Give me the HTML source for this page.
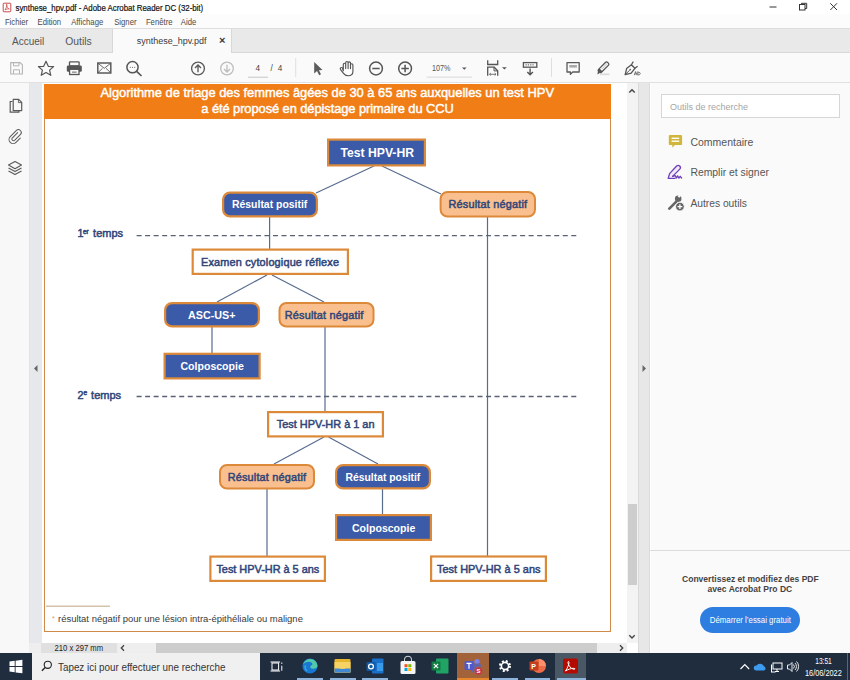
<!DOCTYPE html>
<html><head><meta charset="utf-8">
<style>
*{margin:0;padding:0;box-sizing:border-box}
html,body{width:850px;height:680px;overflow:hidden;background:#fff;font-family:"Liberation Sans",sans-serif}
.a{position:absolute}
</style></head><body>
<div class="a" style="left:0px;top:0px;width:850px;height:14px;background:#fff"></div>
<div class="a" style="left:0px;top:14px;width:850px;height:14px;background:#fcfcfc"></div>
<div class="a" style="left:0px;top:28px;width:850px;height:25px;background:#e9e9e9;border-top:1px solid #dedede;border-bottom:1px solid #d8d8d8"></div>
<div class="a" style="left:112px;top:29px;width:120px;height:24px;background:#fafafa;border-left:1px solid #d8d8d8;border-right:1px solid #d8d8d8"></div>
<div class="a" style="left:0px;top:53px;width:850px;height:30px;background:#fafafa;border-bottom:1px solid #e1e1e1"></div>
<div class="a" style="left:0px;top:83px;width:30px;height:570px;background:#f8f8f8;border-right:1px solid #e3e3e3"></div>
<div class="a" style="left:30px;top:83px;width:12px;height:560px;background:#e6e8eb"></div>
<div class="a" style="left:42px;top:83px;width:585px;height:560px;background:#fff"></div>
<div class="a" style="left:44px;top:84px;width:567px;height:548px;border:1.4px solid #d08a4a;border-top:none"></div>
<div class="a" style="left:44px;top:84px;width:567px;height:35px;background:#f07d16"></div>
<div class="a" style="left:627px;top:83px;width:11px;height:560px;background:#f3f3f3"></div>
<div class="a" style="left:628px;top:504px;width:9px;height:81px;background:#cdcdcd"></div>
<div class="a" style="left:638px;top:83px;width:12px;height:570px;background:#e7e7e7;border-left:1px solid #d9d9d9;border-right:1px solid #dadada"></div>
<div class="a" style="left:651px;top:83px;width:199px;height:570px;background:#fafafa"></div>
<div class="a" style="left:650px;top:550px;width:200px;height:1px;background:#dcdcdc"></div>
<div class="a" style="left:661px;top:94px;width:179px;height:24px;background:#fff;border:1px solid #d6d6d6"></div>
<div class="a" style="left:700px;top:607px;width:100px;height:26px;background:#2d7ee0;border-radius:13px"></div>
<div class="a" style="left:29px;top:642.5px;width:598px;height:10px;background:#eeeeee"></div>
<div class="a" style="left:41px;top:642.5px;width:76px;height:10px;background:#e0e0e0"></div>
<div class="a" style="left:156px;top:642.5px;width:441px;height:10px;background:#cdcdcd"></div>
<div class="a" style="left:29px;top:652.5px;width:822px;height:1px;background:#f7f7f7"></div>
<div class="a" style="left:0px;top:653px;width:850px;height:27px;background:#1f2d3e"></div>
<div class="a" style="left:32px;top:653px;width:228px;height:27px;background:#f0f0f0"></div>
<div class="a" style="left:457px;top:653px;width:32px;height:27px;background:#a3633a"></div>
<div class="a" style="left:555px;top:653px;width:31px;height:27px;background:#4a5866"></div>
<div class="a" style="left:297px;top:678px;width:26px;height:2px;background:#8fb4dc"></div>
<div class="a" style="left:330px;top:678px;width:26px;height:2px;background:#8fb4dc"></div>
<div class="a" style="left:362px;top:678px;width:26px;height:2px;background:#8fb4dc"></div>
<div class="a" style="left:457px;top:678px;width:32px;height:2px;background:#e8862c"></div>
<div class="a" style="left:492px;top:678px;width:26px;height:2px;background:#8fb4dc"></div>
<div class="a" style="left:525px;top:678px;width:25px;height:2px;background:#8fb4dc"></div>
<div class="a" style="left:557px;top:678px;width:29px;height:2px;background:#8fb4dc"></div>
<div class="a" style="left:847px;top:653px;width:1px;height:27px;background:#5a6670"></div>
<svg class="a" style="left:0;top:0" width="850" height="680" viewBox="0 0 850 680" font-family="Liberation Sans, sans-serif">
<text transform="translate(15.5,11) scale(0.875,1)" font-size="9" fill="#111" font-weight="normal" stroke="#111" stroke-width="0.2">synthese_hpv.pdf - Adobe Acrobat Reader DC (32-bit)</text>
<text transform="translate(4.9,24.6) scale(0.86,1)" font-size="9" fill="#4a4a4a" font-weight="normal">Fichier</text>
<text transform="translate(37.5,24.6) scale(0.86,1)" font-size="9" fill="#4a4a4a" font-weight="normal">Edition</text>
<text transform="translate(71.2,24.6) scale(0.86,1)" font-size="9" fill="#4a4a4a" font-weight="normal">Affichage</text>
<text transform="translate(114.2,24.6) scale(0.86,1)" font-size="9" fill="#4a4a4a" font-weight="normal">Signer</text>
<text transform="translate(145.9,24.6) scale(0.86,1)" font-size="9" fill="#4a4a4a" font-weight="normal">Fenêtre</text>
<text transform="translate(180.8,24.6) scale(0.86,1)" font-size="9" fill="#4a4a4a" font-weight="normal">Aide</text>
<text transform="translate(12,44.9) scale(0.913,1)" font-size="11" fill="#555" font-weight="normal">Accueil</text>
<text transform="translate(65.3,44.9) scale(0.942,1)" font-size="11" fill="#555" font-weight="normal">Outils</text>
<text transform="translate(136.7,43.6) scale(0.949,1)" font-size="9.5" fill="#3a3a3a" font-weight="normal">synthese_hpv.pdf</text>
<text transform="translate(219,44) scale(1.0,1)" font-size="11" fill="#3a3a3a" font-weight="bold">×</text>
<text transform="translate(255.6,70.8) scale(1.0,1)" font-size="8.2" fill="#444" font-weight="normal">4</text>
<text transform="translate(270.6,70.8) scale(1.0,1)" font-size="8.2" fill="#444" font-weight="normal">/</text>
<text transform="translate(277.8,70.8) scale(1.0,1)" font-size="8.2" fill="#444" font-weight="normal">4</text>
<rect x="248" y="76.8" width="20" height="0.7" fill="#b0b0b0"/>
<text transform="translate(432,71) scale(0.84,1)" font-size="8.6" fill="#555" font-weight="normal">107%</text>
<rect x="426.6" y="76.7" width="45.5" height="0.8" fill="#cfcfcf"/>
<path d="M462 67.5 h4.6 l-2.3 2.3z" fill="#555"/>
<rect x="295.3" y="58" width="0.9" height="19" fill="#dcdcdc"/>
<rect x="551" y="58" width="0.9" height="19" fill="#dcdcdc"/>
<text x="100.5" y="96.6" font-size="12.9" fill="#fff" stroke="#fff" stroke-width="0.45" textLength="453.5" lengthAdjust="spacing">Algorithme de triage des femmes âgées de 30 à 65 ans auxquelles un test HPV</text>
<text x="201.3" y="112.5" font-size="12.9" fill="#fff" stroke="#fff" stroke-width="0.45" textLength="252.5" lengthAdjust="spacing">a été proposé en dépistage primaire du CCU</text>
<line x1="374" y1="166" x2="316" y2="193" stroke="#586c8e" stroke-width="1.2"/>
<line x1="382" y1="166" x2="441" y2="194" stroke="#586c8e" stroke-width="1.2"/>
<line x1="269.6" y1="217" x2="269.6" y2="249" stroke="#586c8e" stroke-width="1.2"/>
<line x1="487.5" y1="217" x2="487.5" y2="556" stroke="#586c8e" stroke-width="1.2"/>
<line x1="267" y1="275" x2="217" y2="302" stroke="#586c8e" stroke-width="1.2"/>
<line x1="272" y1="275" x2="324" y2="302" stroke="#586c8e" stroke-width="1.2"/>
<line x1="212" y1="327" x2="212" y2="353" stroke="#586c8e" stroke-width="1.2"/>
<line x1="325" y1="327" x2="325" y2="411" stroke="#586c8e" stroke-width="1.2"/>
<line x1="324" y1="437" x2="274" y2="464" stroke="#586c8e" stroke-width="1.2"/>
<line x1="328.5" y1="437" x2="378" y2="464" stroke="#586c8e" stroke-width="1.2"/>
<line x1="267" y1="489" x2="267" y2="556" stroke="#586c8e" stroke-width="1.2"/>
<line x1="382.5" y1="489" x2="382.5" y2="514" stroke="#586c8e" stroke-width="1.2"/>
<line x1="136.6" y1="235.6" x2="577" y2="235.6" stroke="#586275" stroke-width="1.3" stroke-dasharray="5 3.523"/>
<line x1="136.6" y1="396.5" x2="577" y2="396.5" stroke="#586275" stroke-width="1.3" stroke-dasharray="5 3.523"/>
<rect x="328.10" y="139.60" width="96.80" height="25.80" rx="0" fill="#3b5aa8" stroke="#dc8a3a" stroke-width="2.2"/>
<text x="340.5" y="156.7" fill="#fff" font-size="12.2" font-weight="bold" textLength="73.5" lengthAdjust="spacingAndGlyphs">Test HPV-HR</text>
<rect x="223.10" y="192.60" width="93.80" height="23.80" rx="7" fill="#3b5aa8" stroke="#dc8a3a" stroke-width="2.2"/>
<text x="232" y="208.2" fill="#fff" font-weight="bold" font-size="10.5" textLength="75.3" lengthAdjust="spacingAndGlyphs">Résultat positif</text>
<rect x="440.60" y="192.00" width="94.40" height="24.50" rx="7" fill="#f9bf8e" stroke="#dc8a3a" stroke-width="2"/>
<text x="448.4" y="208.2" fill="#30467a" stroke="#30467a" stroke-width="0.5" font-size="10.9" textLength="78.7" lengthAdjust="spacing">Résultat négatif</text>
<rect x="192.70" y="249.60" width="155.20" height="24.30" rx="0" fill="#fff" stroke="#dc8a3a" stroke-width="2.2"/>
<text x="201" y="265.7" fill="#30467a" stroke="#30467a" stroke-width="0.5" font-size="10.9" textLength="138" lengthAdjust="spacing">Examen cytologique réflexe</text>
<rect x="165.10" y="303.10" width="93.80" height="23.30" rx="7" fill="#3b5aa8" stroke="#dc8a3a" stroke-width="2.2"/>
<text x="188" y="318.7" fill="#fff" font-weight="bold" font-size="10.5" textLength="47.5" lengthAdjust="spacingAndGlyphs">ASC-US+</text>
<rect x="279.50" y="303.00" width="94.00" height="23.50" rx="7" fill="#f9bf8e" stroke="#dc8a3a" stroke-width="2"/>
<text x="284.7" y="318.7" fill="#30467a" stroke="#30467a" stroke-width="0.5" font-size="10.9" textLength="78.6" lengthAdjust="spacing">Résultat négatif</text><text x="364" y="314.5" fill="#f0a060" font-size="6">*</text>
<rect x="164.60" y="353.80" width="95.00" height="24.60" rx="0" fill="#3b5aa8" stroke="#dc8a3a" stroke-width="2.2"/>
<text x="180.5" y="370" fill="#fff" font-weight="bold" font-size="10.5" textLength="63.3" lengthAdjust="spacingAndGlyphs">Colposcopie</text>
<rect x="268.10" y="412.10" width="114.80" height="24.30" rx="0" fill="#fff" stroke="#dc8a3a" stroke-width="2.2"/>
<text x="276.8" y="428" fill="#30467a" stroke="#30467a" stroke-width="0.5" font-size="10.9" textLength="97.7" lengthAdjust="spacing">Test HPV-HR à 1 an</text>
<rect x="220.00" y="465.00" width="94.00" height="23.50" rx="7" fill="#f9bf8e" stroke="#dc8a3a" stroke-width="2"/>
<text x="227.7" y="480.5" fill="#30467a" stroke="#30467a" stroke-width="0.5" font-size="10.9" textLength="78.3" lengthAdjust="spacing">Résultat négatif</text>
<rect x="336.10" y="465.10" width="93.80" height="23.30" rx="7" fill="#3b5aa8" stroke="#dc8a3a" stroke-width="2.2"/>
<text x="345.5" y="480.5" fill="#fff" font-weight="bold" font-size="10.5" textLength="74.8" lengthAdjust="spacingAndGlyphs">Résultat positif</text>
<rect x="336.10" y="515.10" width="94.80" height="24.80" rx="0" fill="#3b5aa8" stroke="#dc8a3a" stroke-width="2.2"/>
<text x="352" y="531.5" fill="#fff" font-weight="bold" font-size="10.5" textLength="63.3" lengthAdjust="spacingAndGlyphs">Colposcopie</text>
<rect x="210.40" y="556.60" width="114.50" height="24.30" rx="0" fill="#fff" stroke="#dc8a3a" stroke-width="2.2"/>
<text x="216.4" y="572.5" fill="#30467a" stroke="#30467a" stroke-width="0.5" font-size="10.9" textLength="102.8" lengthAdjust="spacing">Test HPV-HR à 5 ans</text>
<rect x="431.10" y="556.50" width="114.80" height="24.40" rx="0" fill="#fff" stroke="#dc8a3a" stroke-width="2.2"/>
<text x="437" y="572.5" fill="#30467a" stroke="#30467a" stroke-width="0.5" font-size="10.9" textLength="103.5" lengthAdjust="spacing">Test HPV-HR à 5 ans</text>
<g fill="#30467a" stroke="#30467a" stroke-width="0.5"><text x="77.6" y="236.7" font-size="10.8">1</text><text x="83" y="233.8" font-size="6.6" textLength="5.8" lengthAdjust="spacingAndGlyphs">er</text><text x="93.1" y="236.7" font-size="10.8" textLength="29.9" lengthAdjust="spacingAndGlyphs">temps</text></g>
<g fill="#30467a" stroke="#30467a" stroke-width="0.5"><text x="77.6" y="398.5" font-size="10.8">2</text><text x="83.4" y="394.6" font-size="6.6">e</text><text x="91.1" y="398.5" font-size="10.8" textLength="30" lengthAdjust="spacingAndGlyphs">temps</text></g>
<line x1="46" y1="606.2" x2="110" y2="606.2" stroke="#d2c3aa" stroke-width="1.5"/>
<text x="52" y="621" fill="#d9956a" font-size="7">*</text>
<text x="58" y="622" fill="#3a3a3a" font-size="9.46">résultat négatif pour une lésion intra-épithéliale ou maligne</text>
<text transform="translate(670,110) scale(0.937,1)" font-size="9.6" fill="#a6a6a6" font-weight="normal">Outils de recherche</text>
<text transform="translate(690.4,145.5) scale(0.955,1)" font-size="11" fill="#555" font-weight="normal">Commentaire</text>
<text transform="translate(690.4,176.1) scale(0.945,1)" font-size="11" fill="#555" font-weight="normal">Remplir et signer</text>
<text transform="translate(690.4,206.9) scale(0.935,1)" font-size="11" fill="#555" font-weight="normal">Autres outils</text>
<text transform="translate(682,582) scale(0.92,1)" font-size="9.3" fill="#444" font-weight="bold">Convertissez et modifiez des PDF</text>
<text transform="translate(707.6,592) scale(0.92,1)" font-size="9.3" fill="#444" font-weight="bold">avec Acrobat Pro DC</text>
<text transform="translate(709.8,622.5) scale(0.845,1)" font-size="9.3" fill="#fff" font-weight="normal">Démarrer l’essai gratuit</text>
<text transform="translate(54.6,651.2) scale(0.9,1)" font-size="8.5" fill="#222" font-weight="normal">210 x 297 mm</text>
<text transform="translate(58,671) scale(0.897,1)" font-size="11" fill="#333" font-weight="normal">Tapez ici pour effectuer une recherche</text>
<text transform="translate(815.2,664) scale(0.7,1)" font-size="9.5" fill="#fff" font-weight="normal">13:51</text>
<text transform="translate(805,675.8) scale(0.79,1)" font-size="9.3" fill="#fff" font-weight="normal">16/06/2022</text>
<rect x="3.2" y="3.2" width="7.6" height="8.6" rx="0.8" fill="#fff" stroke="#c94a4a" stroke-width="1"/>
<path d="M5 10 C6 8 7 6 7 4.8 C7 4 6.4 4 6.5 5 C6.7 6.5 8 8.5 9.3 9 C8 8.6 6.2 9 5 10z" fill="none" stroke="#c94a4a" stroke-width="0.8"/>
<rect x="769.5" y="6.5" width="7" height="1" fill="#333"/>
<rect x="799.5" y="4.5" width="5.5" height="5.5" fill="none" stroke="#333" stroke-width="1"/><path d="M801.5 4.5 v-1.2 h5.2 v5.2 h-1.7" fill="none" stroke="#333" stroke-width="1"/>
<path d="M830.3 3.3 L837 10 M837 3.3 L830.3 10" stroke="#333" stroke-width="1"/>
<path d="M10.7 62.6 h9.5 l2.2 2.2 v9.2 h-11.7z" fill="none" stroke="#b5b5b5" stroke-width="1.1"/>
<path d="M13.5 62.6 v3.2 h5.5 v-3.2 M13.5 74 v-4.2 h6 v4.2" fill="none" stroke="#b5b5b5" stroke-width="1"/>
<path d="M46 61.3 L48.3 66.3 L53.6 66.6 L49.6 70.1 L50.8 75.3 L46 72.5 L41.2 75.3 L42.4 70.1 L38.4 66.6 L43.7 66.3z" fill="none" stroke="#555" stroke-width="1.2" stroke-linejoin="round"/>
<rect x="69.5" y="61.8" width="9.6" height="4" rx="0.5" fill="none" stroke="#555" stroke-width="1.3"/>
<rect x="66.8" y="65.6" width="15" height="6.2" rx="1.3" fill="#555"/>
<rect x="69.6" y="69.3" width="9.4" height="5.2" fill="#fafafa" stroke="#555" stroke-width="1.3"/>
<rect x="72" y="71.5" width="4.6" height="1.3" fill="#888"/>
<rect x="97.8" y="63" width="13" height="10" fill="none" stroke="#5a5a5a" stroke-width="1.5"/>
<path d="M98 63.3 L104.3 68.3 L110.6 63.3 M98 72.7 L102.5 68.3 M110.6 72.7 L106 68.3" fill="none" stroke="#5a5a5a" stroke-width="0.9"/>
<circle cx="132.5" cy="67.2" r="5.6" fill="none" stroke="#555" stroke-width="1.5"/>
<path d="M136.6 71.3 L141 75.5" stroke="#555" stroke-width="1.7" stroke-linecap="round"/>
<circle cx="130.3" cy="67.3" r="0.55" fill="#555"/><circle cx="132.5" cy="67.3" r="0.55" fill="#555"/><circle cx="134.7" cy="67.3" r="0.55" fill="#555"/>
<circle cx="198" cy="68.5" r="6.4" fill="none" stroke="#5a5a5a" stroke-width="1.35"/>
<path d="M198 72.3 v-7.2 M195 68 l3 -3 l3 3" fill="none" stroke="#5a5a5a" stroke-width="1.35"/>
<circle cx="227" cy="68.5" r="6.3" fill="none" stroke="#bdbdbd" stroke-width="1.3"/>
<path d="M227 64.7 v7.2 M224 69 l3 3 l3 -3" fill="none" stroke="#bdbdbd" stroke-width="1.3"/>
<path d="M314.2 62 L314.2 73.5 L317 71 L319.2 75.2 L321 74.3 L318.9 70.2 L322.5 70z" fill="#5c5c5c"/>
<path d="M343.3 70.8 V64.4 a1.2 1.2 0 0 1 2.4 0 V68.6 V62.7 a1.2 1.2 0 0 1 2.4 0 V68.6 V63.1 a1.2 1.2 0 0 1 2.4 0 V68.6 V64.9 a1.2 1.2 0 0 1 2.4 0 V71.6 c0 2.5 -2 4.2 -4.8 4.2 c-2.4 0 -3.6 -0.9 -4.8 -2.6 l-2.9 -3.9 a1.2 1.2 0 0 1 2 -1.3z" fill="#fff" stroke="#555" stroke-width="1.15" stroke-linejoin="round"/>
<circle cx="376" cy="68.5" r="6.4" fill="none" stroke="#555" stroke-width="1.5"/><path d="M372.3 68.5 h7.4" stroke="#555" stroke-width="1.5"/>
<circle cx="405.1" cy="68.5" r="6.4" fill="none" stroke="#555" stroke-width="1.5"/><path d="M401.4 68.5 h7.4 M405.1 64.8 v7.4" stroke="#555" stroke-width="1.5"/>
<path d="M487.7 60.2 v4.3 h10 v-4.3" fill="none" stroke="#555" stroke-width="1.3"/>
<path d="M487.7 75.8 v-8.6 h6.5 l3.5 3.5 v5.1" fill="none" stroke="#555" stroke-width="1.3"/><path d="M494 67.2 v3.7 h3.7" fill="none" stroke="#555" stroke-width="1"/>
<path d="M489.5 74.3 h6.5 M489.5 74.3 l1.3 -1.2 M489.5 74.3 l1.3 1.2 M496 74.3 l-1.3 -1.2 M496 74.3 l-1.3 1.2" stroke="#555" stroke-width="0.8" fill="none"/>
<path d="M502 67.3 h4.8 l-2.4 2.2z" fill="#555"/>
<rect x="523.4" y="62.6" width="13.4" height="4.6" fill="none" stroke="#555" stroke-width="1.3"/>
<path d="M525.5 64.9 h9" stroke="#555" stroke-width="1" stroke-dasharray="1.3 1"/>
<path d="M530.1 68.5 v6.3 M527.3 72 l2.8 2.8 l2.8 -2.8" fill="none" stroke="#555" stroke-width="1.4"/>
<path d="M567 62.6 h12.2 v9.4 h-6.5 l-2.3 2.4 v-2.4 h-3.4z" fill="none" stroke="#5a5a5a" stroke-width="1.3" stroke-linejoin="round"/>
<rect x="569.3" y="65" width="7.6" height="2.6" fill="#aaa"/>
<path d="M600 74.3 h9.5" stroke="#dcdcdc" stroke-width="1.8"/>
<g transform="translate(603.2,67.6) rotate(-45)"><rect x="-5.8" y="-2.1" width="12.6" height="4.2" rx="1.6" fill="#f4f4f4" stroke="#555" stroke-width="1.25"/><rect x="-5.8" y="-2.1" width="2.6" height="4.2" fill="#555"/><path d="M-5.8 -1.6 L-9 0.9 L-5.8 1.6z" fill="#555"/><path d="M-2 0 h7" stroke="#d0d0d0" stroke-width="1"/></g>
<path d="M625.2 74.6 L626.6 68.6 L631.4 64.8 L634.9 68.3 L631.2 73.1z" fill="none" stroke="#555" stroke-width="1.3" stroke-linejoin="round"/>
<path d="M625.2 74.6 L629.6 70.2" stroke="#555" stroke-width="1"/><circle cx="630.2" cy="69.6" r="0.8" fill="#555"/>
<path d="M631.4 64.8 L633.3 61.6 M634.9 68.3 L637.6 66.2" stroke="#555" stroke-width="1.2"/>
<g transform="translate(634.2,75.2) scale(1,1)"><path d="M0 0 l1.4 -3.6 l1.4 3.6 M0.6 -1.3 h1.6 M3.6 0 v-3.8 M3.6 -0.9 a1.3 1.3 0 1 0 0.1 -1.6" fill="none" stroke="#555" stroke-width="0.8"/></g>
<path d="M12.5 101.5 h-2.3 v10.7 h8.7 v-1.5" fill="none" stroke="#5a5a5a" stroke-width="1.2"/>
<path d="M13.2 99.3 h5.5 l3 3 v8.3 h-8.5z" fill="none" stroke="#5a5a5a" stroke-width="1.2" stroke-linejoin="round"/><path d="M18.4 99.3 v3.3 h3.3" fill="none" stroke="#5a5a5a" stroke-width="0.9"/>
<path d="M18.6 133 l-6.4 6.4 a2 2 0 0 0 2.8 2.8 l7 -7 a3.4 3.4 0 0 0 -4.8 -4.8 l-7.3 7.3 a4.8 4.8 0 0 0 6.8 6.8 l5 -5" fill="none" stroke="#5a5a5a" stroke-width="1.2" stroke-linecap="round" transform="translate(15,136) scale(0.85) translate(-15.5,-137)"/>
<path d="M15 161.5 l6.5 3.6 l-6.5 3.6 l-6.5 -3.6z" fill="none" stroke="#5a5a5a" stroke-width="1.1" stroke-linejoin="round"/>
<path d="M8.5 168 l6.5 3.6 l6.5 -3.6 M8.5 171 l6.5 3.6 l6.5 -3.6" fill="none" stroke="#5a5a5a" stroke-width="1.1" stroke-linejoin="round"/>
<path d="M629.3 92.5 l2.7 -2.7 l2.7 2.7" fill="none" stroke="#444" stroke-width="1.4"/>
<path d="M629.3 635.3 l2.7 2.7 l2.7 -2.7" fill="none" stroke="#444" stroke-width="1.4"/>
<path d="M642.5 365 v7 l3.5 -3.5z" fill="#666"/>
<path d="M37.5 365 v7 l-3.5 -3.5z" fill="#666"/>
<path d="M124 645.3 l-2.7 2.7 l2.7 2.7" fill="none" stroke="#444" stroke-width="1.3"/>
<path d="M620 645.3 l2.7 2.7 l-2.7 2.7" fill="none" stroke="#444" stroke-width="1.4"/>
<path d="M670 134.9 h10.9 a1.2 1.2 0 0 1 1.2 1.2 v7.8 a1.2 1.2 0 0 1 -1.2 1.2 h-6 l-2.6 2.6 v-2.6 h-2.3 a1.2 1.2 0 0 1 -1.2 -1.2 v-7.8 a1.2 1.2 0 0 1 1.2 -1.2z" fill="#d2b63c"/>
<rect x="671.6" y="137.6" width="7.6" height="1.4" fill="#fff"/><rect x="671.6" y="140.5" width="7.6" height="1.4" fill="#fff"/>
<path d="M668.2 178.4 L669.6 173.6 L676.4 166.2 Q678 164.7 679.7 166 Q681.2 167.6 679.8 169.1 L672.6 176.4 M668.2 178.4 H675" fill="#e9d8fb" fill-opacity="0.5" stroke="#7040b8" stroke-width="1.35" stroke-linejoin="round" stroke-linecap="round"/>
<path d="M672.6 176.4 L675.2 175.6 L676.4 178 L677.6 175.9 L678.9 178.1 L680.2 176.3 L681.6 178" fill="none" stroke="#7040b8" stroke-width="1.3" stroke-linejoin="round" stroke-linecap="round"/>
<path d="M669.3 208.6 L676.3 201.6" stroke="#666" stroke-width="2.7" stroke-linecap="round"/>
<circle cx="678.2" cy="198.8" r="3.3" fill="#666"/><path d="M679.2 197.8 l3.2 -3.2 l-1.6 -1.6 l-3.2 3.2z" fill="#fafafa"/>
<circle cx="679.9" cy="206.6" r="4.4" fill="#666" stroke="#fafafa" stroke-width="1"/><path d="M677.5 206.6 h4.8 M679.9 204.2 v4.8" stroke="#fff" stroke-width="1.3"/>
<path d="M9.5 661.5 l5.2 -0.7 v5.3 h-5.2z M15.6 660.7 l6.8 -0.9 v6.3 h-6.8z M9.5 667 h5.2 v5.3 l-5.2 -0.7z M15.6 667 h6.8 v6.3 l-6.8 -0.9z" fill="#fff"/>
<circle cx="47.8" cy="664.8" r="3.6" fill="none" stroke="#222" stroke-width="1.1"/><path d="M45.2 667.5 l-3.3 3.3" stroke="#222" stroke-width="1.3"/>
<rect x="272" y="663" width="6.6" height="7" fill="none" stroke="#fff" stroke-width="1"/><path d="M270.5 662 h9.6 M270.5 671 h9.6 M281.8 662.5 v1.4 M281.8 665.7 v5" stroke="#fff" stroke-width="1"/>
<circle cx="310" cy="666" r="7.6" fill="#1877d2"/><path d="M303 664.5 a7.4 7.4 0 0 1 14.5 1 c0 2.6 -2.4 3.4 -5 3.2 c-1.6 -0.1 -2.3 -0.8 -2.3 -1.6 c0 -1.6 2.2 -1.4 2.2 -3 c0 -1.8 -3.6 -3.6 -7.4 -1.4z" fill="#52c9a8"/><path d="M307 671 a5 5 0 0 1 -1.5 -5.6" fill="none" stroke="#35a6e8" stroke-width="1.6"/>
<rect x="334.5" y="659" width="16" height="13.5" rx="1" fill="#e8b52e"/><rect x="334.5" y="662" width="16" height="10.5" fill="#f7d365"/><rect x="334.5" y="668.5" width="16" height="4" fill="#3f88d6"/><rect x="340" y="666.3" width="5" height="2.5" fill="#f7d365"/>
<rect x="372" y="658.5" width="11.5" height="15" rx="1" fill="#1a6fc8"/><rect x="366.5" y="662" width="9" height="9" rx="1" fill="#0e5aa8"/><circle cx="371" cy="666.5" r="2.4" fill="none" stroke="#fff" stroke-width="1.3"/><rect x="377" y="663" width="6" height="8" fill="#3a9ae8"/>
<rect x="400.5" y="661" width="15" height="13" rx="1.5" fill="#f4f4f4"/><path d="M404.5 661 v-1.8 a3.5 3 0 0 1 7 0 v1.8" fill="none" stroke="#ddd" stroke-width="1"/><rect x="404.5" y="664.2" width="3" height="3" fill="#f25022"/><rect x="408.3" y="664.2" width="3" height="3" fill="#7fba00"/><rect x="404.5" y="668" width="3" height="3" fill="#00a4ef"/><rect x="408.3" y="668" width="3" height="3" fill="#ffb900"/>
<rect x="436" y="658.5" width="12.5" height="15" rx="1" fill="#21a366"/><rect x="431.5" y="661.5" width="9" height="9" rx="1" fill="#107c41"/><path d="M433.8 663.8 l4.3 4.4 M438.1 663.8 l-4.3 4.4" stroke="#fff" stroke-width="1.2"/>
<circle cx="477" cy="661.5" r="2.6" fill="#7b83eb"/><rect x="471" y="663.5" width="10" height="9" rx="2" fill="#6264a7"/><rect x="464.5" y="661" width="9" height="9" rx="1" fill="#5059c9"/><path d="M466.5 663.3 h5 M469 663.3 v5.5" stroke="#fff" stroke-width="1.2"/><circle cx="478.5" cy="671" r="4" fill="#c4314b" stroke="#a3633a" stroke-width="0.8"/><text x="476.6" y="673.3" font-size="6" fill="#fff" font-weight="bold">S</text>
<g transform="translate(505,666)"><circle r="4.8" fill="none" stroke="#fff" stroke-width="2.4" stroke-dasharray="1.9 1.9"/><circle r="3.6" fill="none" stroke="#fff" stroke-width="1.6"/></g>
<circle cx="539" cy="666" r="7" fill="#ed6c47"/><path d="M539 659 a7 7 0 0 1 7 7 h-7z" fill="#ff8f6b"/><rect x="529.5" y="661.5" width="9" height="9" rx="1" fill="#c43e1c"/><text x="531.3" y="669.3" font-size="7" fill="#fff" font-weight="bold">P</text>
<rect x="563" y="658.5" width="15" height="15" rx="2" fill="#b30b00"/><path d="M565.5 671 c2 -3 3.5 -6.5 3.5 -8.5 c0 -1.5 -1.2 -1.5 -1 0.3 c0.3 2.6 2.6 5.8 5.8 6.5 c1.5 0.3 1.6 -1 0.1 -1 c-3 0 -6.5 1.4 -8.4 2.7z" fill="none" stroke="#fff" stroke-width="1"/>
<path d="M740.5 669 l4.3 -4.3 l4.3 4.3" fill="none" stroke="#fff" stroke-width="1.2"/>
<path d="M756 670.5 a2.5 2.5 0 0 1 0.5 -5 a4 3.5 0 0 1 7.3 0.8 a2.2 2.2 0 0 1 0.3 4.2z" fill="#3d9bf0"/>
<rect x="773" y="663" width="9" height="6" fill="none" stroke="#fff" stroke-width="1"/><path d="M771.5 664.5 v7.5 M771 672 h4.5 M777 669 v2 M775 671.5 h4" stroke="#fff" stroke-width="1"/>
<path d="M787.5 665 h2 l2.5 -2.5 v9 l-2.5 -2.5 h-2z" fill="none" stroke="#fff" stroke-width="0.9"/><path d="M793.5 664.5 a3 3 0 0 1 0 4 M795 663 a5 5 0 0 1 0 7 M796.5 661.5 a7 7 0 0 1 0 10" fill="none" stroke="#fff" stroke-width="0.9"/>
</svg>
</body></html>
